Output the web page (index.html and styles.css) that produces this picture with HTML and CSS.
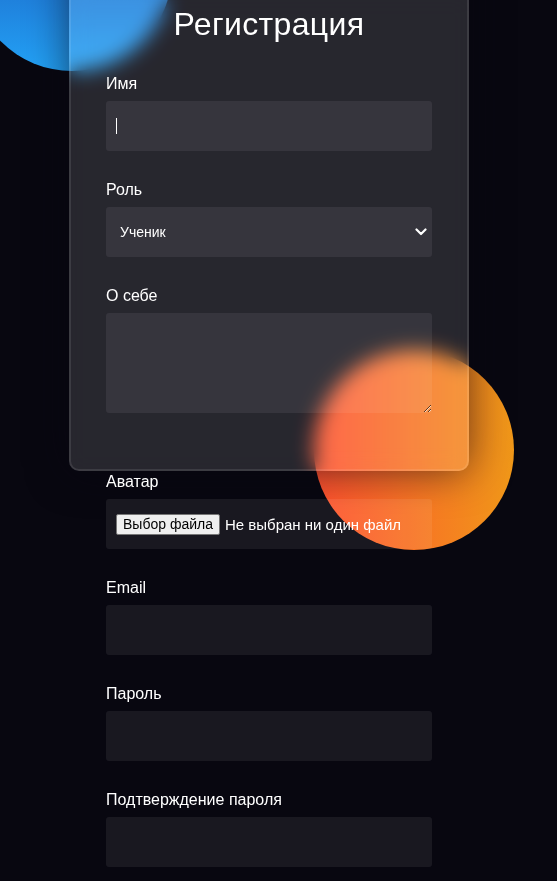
FILE: index.html
```html
<!DOCTYPE html>
<html lang="ru">
<head>
<meta charset="utf-8">
<title>Регистрация</title>
<link rel="stylesheet" href="styles.css">
</head>
<body>
<div class="background">
  <div class="shape shape-blue"></div>
  <div class="shape shape-orange"></div>
</div>
<main class="page">
  <form class="card">
    <h3 class="title">Регистрация</h3>

    <label class="label" for="name">Имя</label>
    <div class="input-wrap">
      <input class="field" id="name" type="text">
      <span class="caret"></span>
    </div>

    <label class="label" for="role">Роль</label>
    <div class="select-wrap">
      <select class="field select" id="role">
        <option>Ученик</option>
        <option>Учитель</option>
      </select>
      <svg class="chevron" width="12" height="8" viewBox="0 0 12 8" aria-hidden="true">
        <path d="M1.5 1.5 L6 6 L10.5 1.5" fill="none" stroke="#fff" stroke-width="2.2" stroke-linecap="round" stroke-linejoin="round"/>
      </svg>
    </div>

    <label class="label" for="about">О себе</label>
    <textarea class="field textarea" id="about"></textarea>

    <label class="label label-wide" for="avatar">Аватар</label>
    <div class="field file-field" id="avatar">
      <span class="file-btn">Выбор файла</span>
      <span class="file-name">Не выбран ни один файл</span>
    </div>

    <label class="label" for="email">Email</label>
    <input class="field" id="email" type="email">

    <label class="label" for="password">Пароль</label>
    <input class="field" id="password" type="password">

    <label class="label" for="password2">Подтверждение пароля</label>
    <input class="field" id="password2" type="password">
  </form>
</main>
</body>
</html>
```
FILE: styles.css
```css
* {
  box-sizing: border-box;
}

html, body {
  margin: 0;
  padding: 0;
}

body {
  background: #080710;
  height: 881px;
  overflow: hidden;
  font-family: "Liberation Sans", Arial, sans-serif;
  color: #ffffff;
  position: relative;
}

.background {
  position: absolute;
  inset: 0;
  z-index: 0;
}

.shape {
  position: absolute;
  width: 200px;
  height: 200px;
  border-radius: 50%;
}

.shape-blue {
  left: -28px;
  top: -129px;
  background: linear-gradient(#1845ad, #23a2f6);
}

.shape-orange {
  left: 314px;
  top: 350px;
  background: linear-gradient(to right, #ff512f, #f09819);
}

.page {
  position: relative;
  z-index: 1;
  display: flow-root;
  padding-left: 69px;
}

.card {
  margin-top: -49px;
  width: 400px;
  height: 520px;
  padding: 50px 35px;
  background: rgba(255, 255, 255, 0.13);
  border: 2px solid rgba(255, 255, 255, 0.1);
  border-radius: 10px;
  backdrop-filter: blur(10px);
  box-shadow: 0 0 40px rgba(8, 7, 16, 0.6);
}

.title {
  margin: 0;
  font-size: 32px;
  font-weight: 500;
  line-height: 42px;
  letter-spacing: 0.35px;
  text-align: center;
}

.label {
  display: block;
  margin-top: 30px;
  font-size: 16px;
  font-weight: 500;
  line-height: 18px;
}

.label-wide {
  margin-top: 60px;
}

.field {
  display: block;
  width: 100%;
  height: 50px;
  margin-top: 8px;
  padding: 0 10px;
  background: rgba(255, 255, 255, 0.07);
  border: 0;
  border-radius: 3px;
  outline: none;
  color: #ffffff;
  font-family: "Liberation Sans", Arial, sans-serif;
  font-size: 14px;
}

.input-wrap,
.select-wrap {
  position: relative;
}

.caret {
  position: absolute;
  left: 10px;
  top: 17px;
  width: 1px;
  height: 16px;
  background: #ffffff;
}

.select {
  appearance: none;
  -webkit-appearance: none;
  padding: 0 14px;
  font-weight: 500;
}

.select option {
  background: #28272e;
  color: #ffffff;
}

.chevron {
  position: absolute;
  right: 5px;
  top: 21px;
  pointer-events: none;
}

.textarea {
  height: 100px;
  padding: 10px;
  resize: vertical;
}

.file-field {
  display: flex;
  align-items: center;
  gap: 5px;
}

.file-btn {
  display: inline-block;
  height: 21px;
  padding: 0 6px;
  background: #efefef;
  border: 1px solid #767676;
  border-radius: 2px;
  color: #000000;
  font-size: 14px;
  line-height: 19px;
}

.file-name {
  color: #ffffff;
  font-size: 15px;
}
```
